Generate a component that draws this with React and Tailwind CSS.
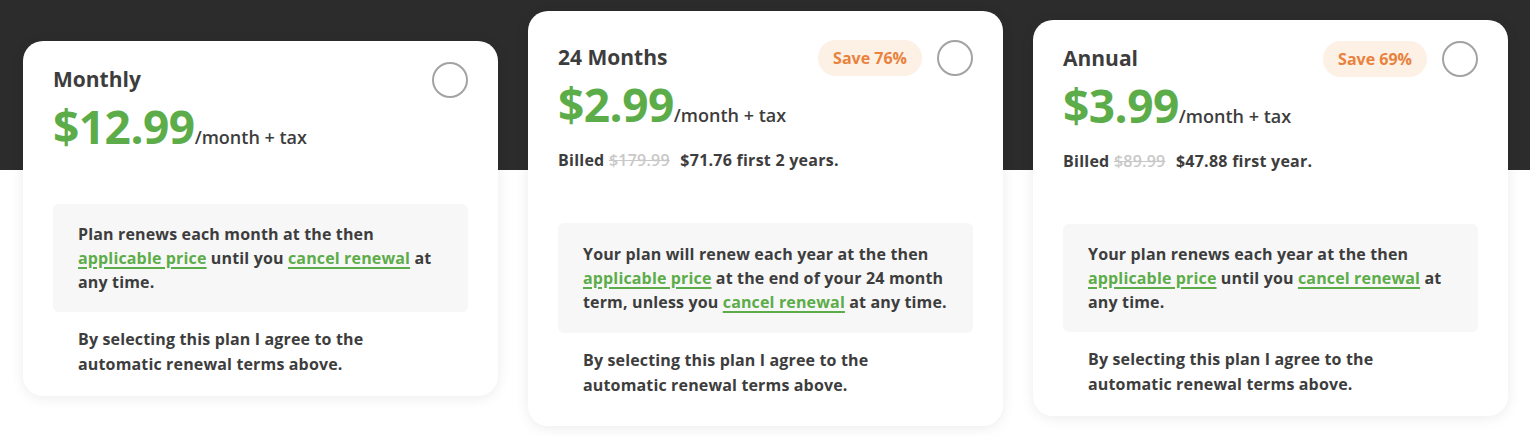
import React from 'react';

const Radio = () => (
  <div className="w-9 h-9 rounded-full border-2 border-[#a3a3a3] bg-white shrink-0"></div>
);

const Badge = ({ children }) => (
  <div className="h-9 px-[15px] rounded-full bg-[#fdf0e5] text-[#e8823c] text-base font-bold flex items-center">
    {children}
  </div>
);

const Link = ({ children }) => (
  <a href="#" className="text-[#5cad4a] underline underline-offset-[3px] decoration-[1.5px]">{children}</a>
);

const Card = ({ title, badge, price, billed, terms, cls, boxCls }) => (
  <div className={`w-[475px] bg-white rounded-[20px] shadow-[0_2px_14px_rgba(0,0,0,0.08)] px-[30px] ${cls}`}>
    {/* header */}
    <div className="flex items-center h-9">
      <div className="text-[21px] font-bold text-[#3d3d3d] flex-1">{title}</div>
      {badge && <Badge>{badge}</Badge>}
      <div className="ml-[15px]"><Radio /></div>
    </div>

    {/* price */}
    <div className="mt-[6px] flex items-baseline leading-[44px]">
      <span className="text-[46px] font-bold text-[#5cad4a] tracking-[-0.5px]">{price}</span>
      <span className="text-lg font-semibold text-[#3d3d3d]">/month + tax</span>
    </div>

    {billed && (
      <div className="mt-[19px] text-base leading-6 font-bold tracking-[0.25px] text-[#3d3d3d]">
        Billed <span className="line-through text-[#c8c8c8] mr-[6px] font-semibold">{billed[0]}</span> {billed[1]}
      </div>
    )}

    {/* renewal box */}
    <div className={`bg-[#f7f7f7] rounded-md px-[25px] text-base leading-6 font-bold tracking-[0.15px] text-[#3d3d3d] ${boxCls}`}>
      {terms}
    </div>

    <p className="mt-[15px] px-[25px] text-base leading-[25px] font-bold tracking-[0.15px] text-[#3d3d3d]">
      By selecting this plan I agree to the<br />automatic renewal terms above.
    </p>
  </div>
);

export default function App() {
  return (
    <div className="relative w-[1530px] h-[436px] bg-white overflow-hidden" style={{ fontFamily: '"Open Sans", "Noto Sans", sans-serif' }}>
      <div className="absolute top-0 left-0 right-0 h-[170px] bg-[#2c2c2c]"></div>
      <div className="relative h-full flex items-center gap-[30px] pl-[23px]">
        <Card
          title="Monthly"
          price="$12.99"
          cls="pt-[21px] pb-[19px]"
          boxCls="mt-[53px] py-[18px]"
          terms={<>Plan renews each month at the then <Link>applicable price</Link> until you <Link>cancel renewal</Link> at any time.</>}
        />
        <Card
          title="24 Months"
          badge="Save 76%"
          price="$2.99"
          billed={['$179.99', '$71.76 first 2 years.']}
          cls="pt-[29px] pb-[28px]"
          boxCls="mt-[51px] py-[19px]"
          terms={<>Your plan will renew each year at the then <Link>applicable price</Link> at the end of your 24 month term, unless you <Link>cancel renewal</Link> at any time.</>}
        />
        <Card
          title="Annual"
          badge="Save 69%"
          price="$3.99"
          billed={['$89.99', '$47.88 first year.']}
          cls="pt-[21px] pb-[19px]"
          boxCls="mt-[51px] py-[18px]"
          terms={<>Your plan renews each year at the then <Link>applicable price</Link> until you <Link>cancel renewal</Link> at any time.</>}
        />
      </div>
    </div>
  );
}
